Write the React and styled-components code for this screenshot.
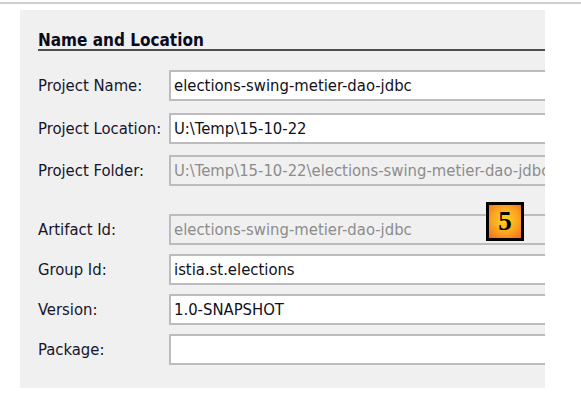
import React from "react";
import styled, { createGlobalStyle } from "styled-components";

const Global = createGlobalStyle`
  html, body { margin: 0; padding: 0; background: #ffffff; }
  body { width: 581px; height: 418px; overflow: hidden; }
`;

const Page = styled.div`
  position: relative;
  width: 581px;
  height: 418px;
  padding-top: 2px;
  box-sizing: border-box;
  font-family: "DejaVu Sans Condensed", "DejaVu Sans", sans-serif;
  font-stretch: condensed;
`;

const TopRule = styled.div`
  height: 2px;
  background: #cfcfcf;
`;

const Panel = styled.div`
  margin: 6px 0 0 20px;
  width: 525px;
  height: 378px;
  background: #f0f0f0;
  overflow: hidden;
  box-sizing: border-box;
  padding: 21px 0 0 18px;
`;

const Heading = styled.div`
  font-weight: bold;
  font-size: 17px;
  color: #0a0a1e;
  line-height: 18px;
  border-bottom: 2px solid #4e4e4e;
`;

const Group = styled.div`
  display: flex;
  flex-direction: column;
  gap: ${(p) => p.$gap}px;
  margin-top: ${(p) => p.$top}px;
`;

const Row = styled.div`
  display: flex;
  align-items: center;
  height: 31px;
`;

const Label = styled.div`
  width: 131px;
  flex: none;
  font-size: 16.5px;
  color: #15152a;
  white-space: nowrap;
`;

const Field = styled.div`
  flex: none;
  width: 440px;
  height: 31px;
  box-sizing: border-box;
  border: 2px solid #bcbcbf;
  border-right: none;
  background: ${(p) => (p.$disabled ? "#f0f0f0" : "#ffffff")};
  color: ${(p) => (p.$disabled ? "#8c8c8c" : "#101020")};
  font-size: 16.5px;
  line-height: 27px;
  padding-left: 3px;
  white-space: nowrap;
  overflow: hidden;
`;

const Badge = styled.div`
  position: absolute;
  left: 486px;
  top: 202px;
  width: 38px;
  height: 39px;
  box-sizing: border-box;
  border: 3px solid #000;
  background: radial-gradient(circle at 50% 45%, #ffd61e 0%, #fba322 55%, #f06a1c 100%);
  display: flex;
  align-items: center;
  justify-content: center;
  font-family: "Liberation Serif", serif;
  font-weight: bold;
  font-size: 27px;
  color: #000;
  line-height: 1;
`;

const rowsA = [
  { label: "Project Name:", value: "elections-swing-metier-dao-jdbc" },
  { label: "Project Location:", value: "U:\\Temp\\15-10-22" },
  {
    label: "Project Folder:",
    value: "U:\\Temp\\15-10-22\\elections-swing-metier-dao-jdbc",
    disabled: true,
  },
];

const rowsB = [
  { label: "Artifact Id:", value: "elections-swing-metier-dao-jdbc", disabled: true },
  { label: "Group Id:", value: "istia.st.elections" },
  { label: "Version:", value: "1.0-SNAPSHOT" },
  { label: "Package:", value: "" },
];

const renderRow = (r) => (
  <Row key={r.label}>
    <Label>{r.label}</Label>
    <Field $disabled={r.disabled}>{r.value}</Field>
  </Row>
);

export default function App() {
  return (
    <>
      <Global />
      <Page>
        <TopRule />
        <Panel>
          <Heading>Name and Location</Heading>
          <Group $gap={11.5} $top={19}>
            {rowsA.map(renderRow)}
          </Group>
          <Group $gap={9} $top={28}>
            {rowsB.map(renderRow)}
          </Group>
        </Panel>
        <Badge>5</Badge>
      </Page>
    </>
  );
}
